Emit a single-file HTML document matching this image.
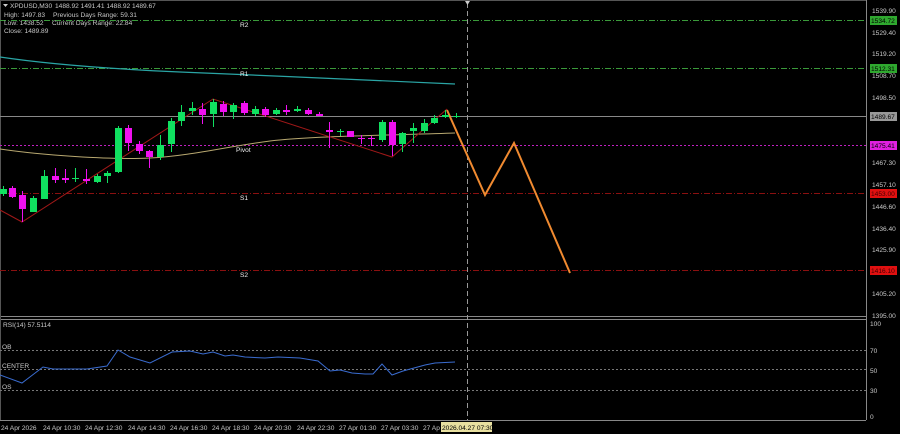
<!DOCTYPE html><html><head><style>body{margin:0;background:#000}svg{display:block}text{font-family:"Liberation Sans",sans-serif;font-size:6.6px;fill:#c8c8c8}</style></head><body>
<svg width="900" height="434" viewBox="0 0 900 434" xmlns="http://www.w3.org/2000/svg">
<rect width="900" height="434" fill="#000"/>
<line x1="0" y1="0.5" x2="866" y2="0.5" stroke="#555"/>
<line x1="866.5" y1="0" x2="866.5" y2="420" stroke="#888"/>
<line x1="0" y1="316.5" x2="866" y2="316.5" stroke="#888"/>
<line x1="0" y1="319.5" x2="866" y2="319.5" stroke="#888"/>
<line x1="0" y1="420.5" x2="866" y2="420.5" stroke="#888"/>
<line x1="0.5" y1="0" x2="0.5" y2="420" stroke="#555"/>
<g stroke-dasharray="6,2,1,2" stroke-width="1">
<line x1="0" y1="20.5" x2="866" y2="20.5" stroke="#3a9a3a"/>
<line x1="0" y1="68.5" x2="866" y2="68.5" stroke="#3a9a3a"/>
<line x1="0" y1="193.5" x2="866" y2="193.5" stroke="#8a1010"/>
<line x1="0" y1="270.5" x2="866" y2="270.5" stroke="#8a1010"/>
</g>
<line x1="0" y1="145.5" x2="866" y2="145.5" stroke="#c020c0" stroke-dasharray="2,2"/>
<line x1="0" y1="116.5" x2="866" y2="116.5" stroke="#888"/>
<line x1="467.5" y1="3" x2="467.5" y2="420" stroke="#999" stroke-dasharray="5,3"/>
<polygon points="465,1 470,1 467.5,5" fill="#ccc"/>
<path d="M0,57 C40,63 90,68 180,72 S380,80 455,84" fill="none" stroke="#2aa5a5" stroke-width="1.2"/>
<path d="M0,149 C40,155 110,160 150,158 S230,146 270,141 S400,135 455,133" fill="none" stroke="#b8a870" stroke-width="1"/>
<polyline points="0,210 22,222 213,99 392,157 447,109" fill="none" stroke="#a01818" stroke-width="1"/>
<polyline points="447,110 485,195 514,143 570,273" fill="none" stroke="#f08a30" stroke-width="2"/>
<g id="cd"></g>
<text x="240" y="27" style="fill:#eee">R2</text>
<text x="240" y="76" style="fill:#eee">R1</text>
<text x="236" y="152" style="fill:#eee">Pivot</text>
<text x="240" y="200" style="fill:#eee">S1</text>
<text x="240" y="277" style="fill:#eee">S2</text>
<polygon points="3,4 8,4 5.5,7" fill="#ccc"/>
<text x="10" y="8">XPDUSD,M30</text><text x="55" y="8">1488.92  1491.41  1488.92  1489.67</text>
<text x="4" y="17">High: 1497.83</text><text x="53" y="17">Previous Days Range: 59.31</text>
<text x="4" y="25">Low: 1438.52</text><text x="52" y="25">Current Days Range: 22.84</text>
<text x="4" y="33">Close: 1489.89</text>
<g>
<text x="872" y="13">1539.90</text><text x="872" y="35">1529.40</text><text x="872" y="56">1519.20</text><text x="872" y="78">1508.70</text><text x="872" y="100">1498.50</text><text x="872" y="165">1467.30</text><text x="872" y="187">1457.10</text><text x="872" y="209">1446.60</text><text x="872" y="231">1436.40</text><text x="872" y="252">1425.90</text><text x="872" y="296">1405.20</text><text x="872" y="318">1395.00</text>
</g>
<rect x="870" y="16" width="27" height="9" fill="#2fa82f"/><text x="871" y="23" style="fill:#000">1534.72</text>
<rect x="870" y="64" width="27" height="9" fill="#2fa82f"/><text x="871" y="71" style="fill:#000">1512.31</text>
<rect x="870" y="112" width="27" height="9" fill="#999"/><text x="871" y="119" style="fill:#000">1489.67</text>
<rect x="870" y="141" width="27" height="9" fill="#e020e0"/><text x="871" y="148" style="fill:#000">1475.41</text>
<rect x="870" y="189" width="27" height="9" fill="#e01010"/><text x="871" y="196" style="fill:#400">1453.00</text>
<rect x="870" y="266" width="27" height="9" fill="#e01010"/><text x="871" y="273" style="fill:#400">1416.10</text>
<g stroke="#777" stroke-dasharray="2,2"><line x1="0" y1="350.5" x2="866" y2="350.5"/><line x1="0" y1="369.5" x2="866" y2="369.5"/><line x1="0" y1="390.5" x2="866" y2="390.5"/></g>
<text x="3" y="327">RSI(14) 57.5114</text>
<text x="2" y="349">OB</text><text x="2" y="368">CENTER</text><text x="2" y="389">OS</text>
<text x="870" y="326">100</text><text x="870" y="353">70</text><text x="870" y="373">50</text><text x="870" y="393">30</text><text x="870" y="419">0</text>
<polyline fill="none" stroke="#3a6cd0" stroke-width="1" points="0,375 22,383 43,367 53,369 87,369 107,366 118,350 130,357 150,363 172,352 190,351 203,354 213,352 225,356 233,355 245,357 265,358 278,357 300,358 318,361 330,371 340,370 352,373 365,374 373,374 382,364 392,375 403,371 425,365 435,363 455,362"/>
<text x="1" y="430">24 Apr 2026</text><text x="43" y="430">24 Apr 10:30</text><text x="85" y="430">24 Apr 12:30</text><text x="128" y="430">24 Apr 14:30</text><text x="170" y="430">24 Apr 16:30</text><text x="212" y="430">24 Apr 18:30</text><text x="254" y="430">24 Apr 20:30</text><text x="297" y="430">24 Apr 22:30</text><text x="339" y="430">27 Apr 01:30</text><text x="381" y="430">27 Apr 03:30</text><text x="423" y="430">27 Ap</text>
<rect x="441" y="422" width="51" height="10" fill="#e8e0a0"/><text x="442" y="430" style="fill:#000">2026.04.27 07:30</text>
</svg>
<script>
var d=[[3,189,194,186,196,1],[12,188,197,186,198,0],[22,195,209,191,222,0],[33,198,212,196,212,1],[44,176,199,170,199,1],[55,176,180,168,183,0],[65,178,180,169,183,0],[75,178,179,168,182,1],[86,179,181,169,184,0],[97,176,182,174,183,1],[107,173,176,171,183,1],[118,128,172,126,173,1],[128,128,143,125,151,0],[139,144,151,141,154,0],[149,151,157,150,168,0],[160,145,157,135,160,1],[171,121,144,118,152,1],[181,112,121,105,126,1],[192,108,111,102,115,1],[202,109,115,103,124,0],[213,102,114,99,127,1],[223,104,112,101,116,0],[233,105,112,103,119,1],[244,103,113,101,115,0],[255,109,114,106,116,1],[265,109,115,107,117,0],[276,110,114,108,115,1],[286,110,112,105,115,0],[297,109,111,106,112,1],[308,110,114,108,115,0],[319,114,116,112,116,0],[329,130,132,122,148,0],[340,131,132,129,136,1],[350,131,137,131,137,0],[361,138,139,135,144,0],[371,138,139,136,146,0],[382,122,140,120,142,1],[392,122,145,120,156,0],[402,133,144,132,152,1],[413,128,131,123,143,1],[424,123,131,119,133,1],[434,118,123,115,124,1],[445,115,117,110,118,1],[456,116,117,113,118,1]];
var s='';
d.forEach(function(c){var col=c[5]?'#10e060':'#f010f0';
s+='<line x1="'+(c[0]+.5)+'" y1="'+c[3]+'" x2="'+(c[0]+.5)+'" y2="'+c[4]+'" stroke="'+col+'"/>';
s+='<rect x="'+(c[0]-3)+'" y="'+c[1]+'" width="7" height="'+Math.max(1,c[2]-c[1])+'" fill="'+col+'"/>';});
document.getElementById('cd').innerHTML=s;
</script>
</body></html>
